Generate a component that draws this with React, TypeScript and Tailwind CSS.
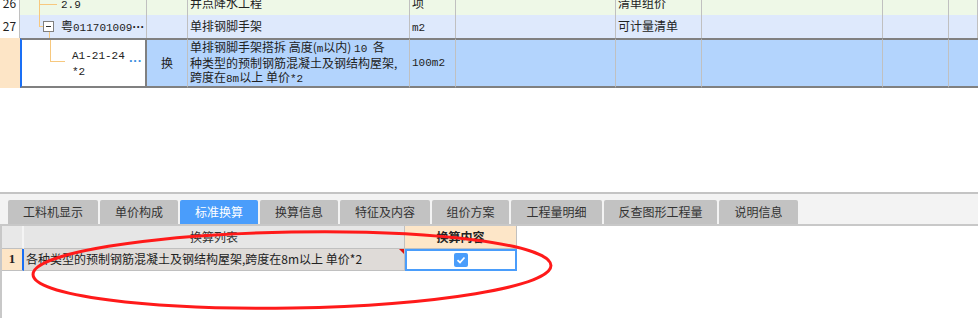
import React from 'react';

// 顶部清单表格 + 底部"标准换算"面板

const cols = 'grid grid-cols-[20px_127px_41px_222px_46px_160px_86px_181px_66px_29px]';
const cell = 'border-r border-b border-[#c0c0c0]';

function Mono({ children }: { children: React.ReactNode }) {
  return <span className="font-['Liberation_Mono',monospace] text-[11px]">{children}</span>;
}

const tabs = [
  { label: '工料机显示', w: 'w-[90px]' },
  { label: '单价构成', w: 'w-[78px]' },
  { label: '标准换算', w: 'w-[78px]', active: true },
  { label: '换算信息', w: 'w-[78px]' },
  { label: '特征及内容', w: 'w-[90px]' },
  { label: '组价方案', w: 'w-[77px]' },
  { label: '工程量明细', w: 'w-[91px]' },
  { label: '反查图形工程量', w: 'w-[113px]' },
  { label: '说明信息', w: 'w-[79px]' },
];

export default function App() {
  return (
    <div className="relative w-[978px] h-[318px] overflow-hidden bg-white text-[12px] text-[#222] font-['Noto_Sans_CJK_SC','Noto_Sans',sans-serif]">
      {/* 清单表格 */}
      <div className="h-[192px] overflow-hidden">
        {/* 26 行(滚动后只露出下半截) */}
        <div className={`${cols} h-[23px] -mt-[8px] leading-[22px] whitespace-nowrap`}>
          <div className={`${cell} bg-white text-center`}>26</div>
          <div className={`${cell} relative bg-[#eef8e7] pl-[41px]`}>
            <div className="absolute left-[19px] top-0 bottom-0 w-px bg-[#f7c87e]" />
            <div className="absolute left-[19px] top-[12px] w-[18px] h-px bg-[#f7c87e]" />
            <Mono>2.9</Mono>
          </div>
          <div className={`${cell} bg-[#eef8e7]`} />
          <div className={`${cell} bg-[#eef8e7] pl-[2px]`}>井点降水工程</div>
          <div className={`${cell} bg-[#eef8e7] pl-[2px]`}>项</div>
          <div className={`${cell} bg-[#eef8e7]`} />
          <div className={`${cell} bg-[#eef8e7] pl-[2px]`}>清单组价</div>
          <div className={`${cell} bg-[#eef8e7]`} />
          <div className={`${cell} bg-[#eef8e7]`} />
          <div className={`${cell} bg-[#eef8e7]`} />
        </div>

        {/* 27 行 */}
        <div className={`${cols} h-[23px] leading-[22px] whitespace-nowrap`}>
          <div className={`${cell} bg-white text-center`}>27</div>
          <div className={`${cell} relative bg-[#dee9fc] pl-[41px]`}>
            <div className="absolute left-[19px] top-0 h-[11px] w-px bg-[#f7c87e]" />
            <div className="absolute left-[19px] top-[11px] w-[4px] h-px bg-[#f7c87e]" />
            <div className="absolute left-[23px] top-[6px] w-[11px] h-[11px] border border-[#808080] bg-white flex items-center justify-center">
              <div className="w-[5px] h-px bg-[#333]" />
            </div>
            <div className="absolute left-[29px] top-[17px] bottom-0 w-px bg-[#f7c87e]" />
            粤<Mono>011701009</Mono>
            <span className="font-['Liberation_Sans',sans-serif] font-bold">···</span>
          </div>
          <div className={`${cell} bg-[#dee9fc]`} />
          <div className={`${cell} bg-[#dee9fc] pl-[2px]`}>单排钢脚手架</div>
          <div className={`${cell} bg-[#dee9fc] pl-[2px]`}>
            <Mono>m2</Mono>
          </div>
          <div className={`${cell} bg-[#dee9fc]`} />
          <div className={`${cell} bg-[#dee9fc] pl-[2px]`}>可计量清单</div>
          <div className={`${cell} bg-[#dee9fc]`} />
          <div className={`${cell} bg-[#dee9fc]`} />
          <div className={`${cell} bg-[#dee9fc]`} />
        </div>

        {/* 选中的定额行 */}
        <div className={`${cols} h-[48px]`}>
          <div className="bg-[#fde5c6]" />
          <div className="relative bg-white border-l-2 border-[#1a6ff5] border-y-2 border-y-[#808080] border-r-2 border-r-[#808080] whitespace-nowrap">
            <div className="absolute left-[28px] top-0 h-[21px] w-px bg-[#f7c87e]" />
            <div className="absolute left-[28px] top-[21px] w-[15px] h-px bg-[#f7c87e]" />
            <div className="absolute left-[50px] top-[7px] leading-[14px] text-[12px]">
              <Mono>A1-21-24</Mono>
              <br />
              <Mono>*2</Mono>
            </div>
            <div className="absolute left-[107px] top-[16px] text-[13px] leading-[10px] text-[#3d8fdf] font-bold font-['Liberation_Sans',sans-serif]">
              ···
            </div>
          </div>
          <div className="bg-[#b3d4fd] border-y-2 border-[#808080] border-r border-r-[#c0c0c0] flex items-center justify-center">
            换
          </div>
          <div className="bg-[#b3d4fd] border-y-2 border-[#808080] border-r border-r-[#c0c0c0] pl-[2px] leading-[14px] flex items-center whitespace-nowrap">
            <div>
              单排钢脚手架搭拆 高度(<Mono>m</Mono>以内) <Mono>10</Mono>&nbsp;&nbsp;各
              <br />
              种类型的预制钢筋混凝土及钢结构屋架,
              <br />
              跨度在<Mono>8m</Mono>以上 单价<Mono>*2</Mono>
            </div>
          </div>
          <div className="bg-[#b3d4fd] border-y-2 border-[#808080] border-r border-r-[#c0c0c0] pl-[2px] flex items-center">
            <Mono>100m2</Mono>
          </div>
          <div className="bg-[#b3d4fd] border-y-2 border-[#808080] border-r border-r-[#c0c0c0]" />
          <div className="bg-[#b3d4fd] border-y-2 border-[#808080] border-r border-r-[#c0c0c0]" />
          <div className="bg-[#b3d4fd] border-y-2 border-[#808080] border-r border-r-[#c0c0c0]" />
          <div className="bg-[#b3d4fd] border-y-2 border-[#808080] border-r border-r-[#c0c0c0]" />
          <div className="bg-[#b3d4fd] border-y-2 border-[#808080]" />
        </div>
      </div>

      {/* 页签 */}
      <div className="h-[2px] bg-[#c4c4c4]" />
      <div className="h-[30px] bg-[#f3f3f3] flex items-end gap-[2px] pl-[8px]">
        {tabs.map((t) => (
          <div
            key={t.label}
            className={`${t.w} h-[24px] rounded-t-[2px] flex items-center justify-center text-[12px] ${
              t.active ? 'bg-[#4a9dfb] text-white' : 'bg-[#c2c2c2] text-[#333]'
            }`}
          >
            {t.label}
          </div>
        ))}
      </div>

      {/* 换算列表 */}
      <div className="h-[94px] border-t-2 border-l-2 border-[#c8c8c8]">
        <div className="grid grid-cols-[22px_381px_112px] h-[23px] leading-[22px]">
          <div className="bg-[#e8e8e8] border-r-2 border-[#f4f4f4] border-b border-b-[#c0c0c0]" />
          <div className="bg-[#e6e6e6] border-r border-b border-[#c0c0c0] text-center text-[#333]">换算列表</div>
          <div className="bg-[#fde6c8] border-r border-b border-[#c0c0c0] text-center font-bold text-[#222]">换算内容</div>
        </div>
        <div className="grid grid-cols-[22px_381px_112px] h-[22px] leading-[20px]">
          <div className="bg-[#fde5c6] border-r-2 border-[#1a6ff5] border-b border-b-[#c0c0c0] text-center font-bold font-['Liberation_Serif',serif] text-[13px]">
            1
          </div>
          <div className="relative bg-[#dfdbd8] border-r border-b border-[#c0c0c0] pl-[2px] whitespace-nowrap">
            各种类型的预制钢筋混凝土及钢结构屋架,跨度在8m以上 单价*2
            <div className="absolute right-0 top-0 w-0 h-0 border-t-[5px] border-t-[#e01010] border-l-[5px] border-l-transparent" />
          </div>
          <div className="border-2 border-[#4a9dfb] bg-white flex items-center justify-center">
            <div className="w-[14px] h-[14px] rounded-[2px] bg-[#4a9dfb] flex items-center justify-center">
              <svg width="10" height="10" viewBox="0 0 10 10">
                <polyline points="1.5,5.2 4,7.5 8.5,2.5" fill="none" stroke="white" strokeWidth="1.8" />
              </svg>
            </div>
          </div>
        </div>
      </div>

      {/* 红色圈注 */}
      <svg className="absolute left-0 top-0 pointer-events-none" width="978" height="318">
        <ellipse cx="292" cy="270" rx="259" ry="38" fill="none" stroke="#ff1a1a" strokeWidth="3" transform="rotate(-1 292 270)" />
      </svg>
    </div>
  );
}
